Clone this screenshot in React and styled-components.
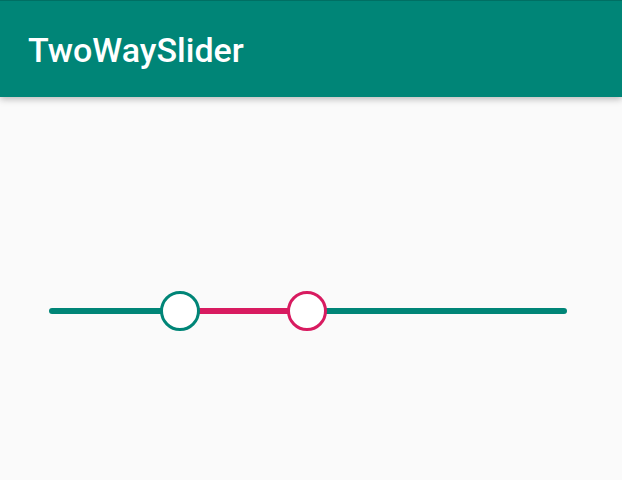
import React, { useState } from "react";
import styled, { createGlobalStyle } from "styled-components";

const GlobalStyle = createGlobalStyle`
  html, body {
    margin: 0;
    padding: 0;
    background: #fafafa;
    font-family: Roboto, "Noto Sans", sans-serif;
  }
`;

const TRACK_WIDTH = 518;

export default function App() {
  // thumb positions in px along the track
  const [low] = useState(131);
  const [high] = useState(258);

  return (
    <Screen>
      <GlobalStyle />
      <AppBar>
        <Title>TwoWaySlider</Title>
      </AppBar>
      <Content>
        <Slider>
          <Segment color="#008577" style={{ width: low }} />
          <Segment color="#d81b60" style={{ width: high - low }} />
          <Segment color="#008577" style={{ flex: 1 }} />
          <Thumb color="#008577" style={{ left: low }} />
          <Thumb color="#d81b60" style={{ left: high }} />
        </Slider>
      </Content>
    </Screen>
  );
}

const Screen = styled.div`
  width: 622px;
  height: 480px;
  background: #fafafa;
  overflow: hidden;
  display: flex;
  flex-direction: column;
`;

const AppBar = styled.header`
  height: 97px;
  background: #008577;
  border-top: 1px solid #006f63;
  box-sizing: border-box;
  display: flex;
  align-items: center;
  padding-left: 28px;
  box-shadow: 0 2px 7px rgba(0, 0, 0, 0.28);
  position: relative;
  z-index: 1;
`;

const Title = styled.h1`
  margin: 0;
  margin-top: 2px;
  color: #ffffff;
  font-family: Roboto, sans-serif;
  font-weight: 500;
  font-size: 34px;
  letter-spacing: 0;
`;

const Content = styled.main`
  flex: 1;
  padding: 211px 0 0 49px;
`;

const Slider = styled.div`
  position: relative;
  width: ${TRACK_WIDTH}px;
  height: 6px;
  display: flex;
`;

const Segment = styled.div`
  height: 6px;
  background: ${(p) => p.color};
  &:first-child {
    border-radius: 3px 0 0 3px;
  }
  &:nth-child(3) {
    border-radius: 0 3px 3px 0;
  }
`;

const Thumb = styled.div`
  position: absolute;
  top: 3px;
  width: 40px;
  height: 40px;
  box-sizing: border-box;
  border-radius: 50%;
  border: 3px solid ${(p) => p.color};
  background: #ffffff;
  transform: translate(-50%, -50%);
`;
